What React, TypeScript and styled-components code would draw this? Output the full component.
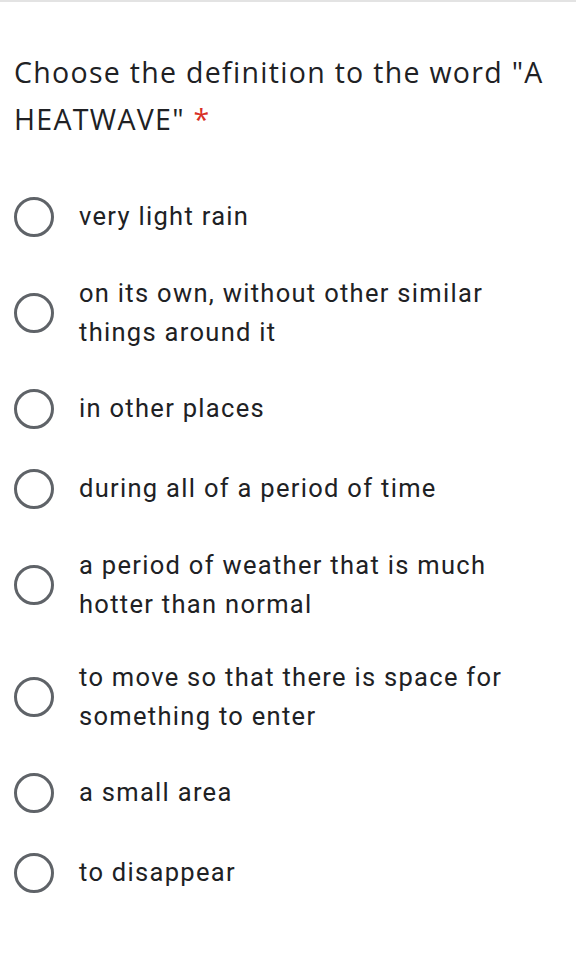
import React from "react";
import styled, { createGlobalStyle } from "styled-components";

const Global = createGlobalStyle`
  html, body { margin: 0; padding: 0; background: #ffffff; }
  * { box-sizing: border-box; }
`;

const Page = styled.div`
  width: 576px;
  min-height: 956px;
  border-top: 2px solid #e3e3e3;
  background: #ffffff;
  padding: 47px 0 0 0;
`;

const Title = styled.h1`
  margin: 0 0 35px 0;
  padding: 0 14px;
  font-family: "Open Sans", sans-serif;
  font-weight: 400;
  font-size: 28.5px;
  letter-spacing: 1.3px;
  line-height: 47px;
  color: #202124;
`;

const Star = styled.span`
  color: #d93025;
`;

const List = styled.div`
  display: flex;
  flex-direction: column;
  margin-top: -1.5px;
`;

const Row = styled.label`
  display: flex;
  align-items: center;
  min-height: 80px;
  padding: 17px 0 17px 14px;
`;

const Radio = styled.span`
  flex: 0 0 auto;
  width: 40px;
  height: 40px;
  border-radius: 50%;
  border: 3.3px solid #5f6368;
  margin-right: 25px;
`;

const Text = styled.span`
  font-family: Roboto, sans-serif;
  font-size: 25.5px;
  letter-spacing: 1.3px;
  line-height: 39px;
  color: #202124;
  max-width: 440px;
`;

const options = [
  "very light rain",
  "on its own, without other similar things around it",
  "in other places",
  "during all of a period of time",
  "a period of weather that is much hotter than normal",
  "to move so that there is space for something to enter",
  "a small area",
  "to disappear",
];

export default function App() {
  return (
    <>
      <Global />
      <Page>
        <Title>
          Choose the definition to the word "A HEATWAVE" <Star>*</Star>
        </Title>
        <List>
          {options.map((o) => (
            <Row key={o}>
              <Radio />
              <Text>{o}</Text>
            </Row>
          ))}
        </List>
      </Page>
    </>
  );
}
